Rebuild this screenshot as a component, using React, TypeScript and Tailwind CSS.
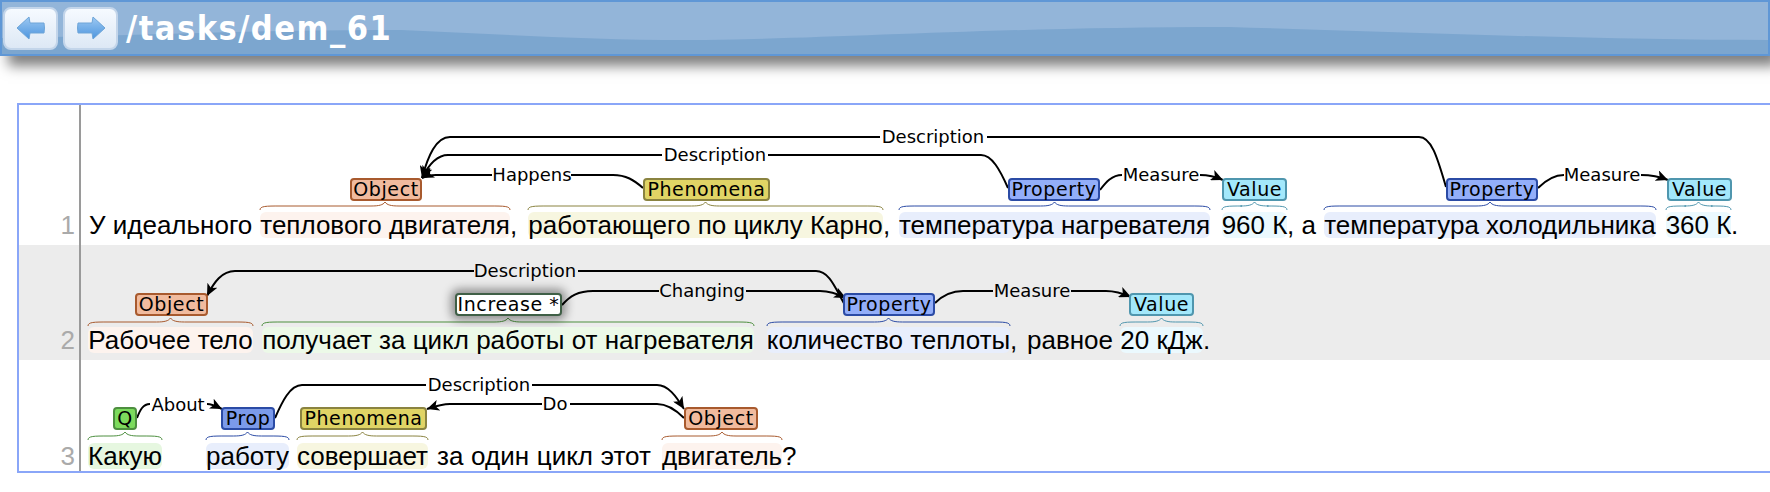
import React from 'react';

const tagBase =
  'absolute flex items-center justify-center h-[23px] box-border border-2 rounded-[4px] text-[19px] tracking-[0.6px] text-black leading-none whitespace-nowrap';
const tagFont = { object: 'bg-[#f1bb9e] border-[#a85a2e]', phenomena: 'bg-[#e0d465] border-[#8a8340]', property: 'bg-[#93aef9] border-[#2b4ba5]', value: 'bg-[#a3e8fb] border-[#4f96ae]' };

const hlObject = 'bg-[#fdf3ee]';
const hlPhen = 'bg-[#f7f6e0]';
const hlProp = 'bg-[#e8eefc]';
const hlValue = 'bg-[#ebf9fe]';
const hlGreen = 'bg-[#ecf9e8]';

const labelFont = "font-['DejaVu_Sans']";

const Hl: React.FC<{ className: string; children: React.ReactNode }> = ({ className, children }) => (
  <span className={`flex h-[26px] shrink-0 items-center justify-center rounded-md ${className}`}>{children}</span>
);

const curly = (x1: number, x2: number, y: number) => {
  const mid = (x1 + x2) / 2;
  return `M${x1} ${y + 5} C${x1} ${y + 1} ${x1 + 6} ${y + 1} ${x1 + 20} ${y + 1} L${mid - 14} ${y + 1} C${mid - 6} ${y + 1} ${mid - 2} ${y} ${mid} ${y - 3} C${mid + 2} ${y} ${mid + 6} ${y + 1} ${mid + 14} ${y + 1} L${x2 - 20} ${y + 1} C${x2 - 6} ${y + 1} ${x2} ${y + 1} ${x2} ${y + 5}`;
};

type Brace = [number, number, string];

const Arcs: React.FC<{
  box: string;
  lines: string[];
  arrows: string[];
  labels: [string, number, number][];
  braces: Brace[];
  braceY: number;
  id: string;
}> = ({ box, lines, arrows, labels, braces, braceY, id }) => (
  <svg viewBox={box} className={`absolute inset-0 h-full w-full ${labelFont}`}>
    <defs>
      <marker id={id} markerUnits="userSpaceOnUse" markerWidth="13" markerHeight="11" refX="12" refY="5.5" orient="auto">
        <path d="M0 0 L12 5.5 L0 11 L3 5.5 Z" fill="#000" />
      </marker>
    </defs>
    {braces.map(([a, b, c]) => (
      <path key={a} d={curly(a, b, braceY)} fill="none" stroke={c} strokeWidth="1" />
    ))}
    {lines.map((d) => (
      <path key={d} d={d} fill="none" stroke="#000" strokeWidth="2" />
    ))}
    {arrows.map((d) => (
      <path key={d} d={d} fill="none" stroke="#000" strokeWidth="2" markerEnd={`url(#${id})`} />
    ))}
    {labels.map(([t, x, y]) => (
      <text key={t + x} x={x} y={y} textAnchor="middle" fontSize="18" fill="#000">
        {t}
      </text>
    ))}
  </svg>
);

const NavButton: React.FC<{ flip?: boolean }> = ({ flip }) => (
  <button className="flex h-[43px] w-[55px] items-center justify-center rounded-lg border-2 border-[#c3d5ea] bg-gradient-to-b from-[#f6faff] to-[#dde8f5]">
    <svg width="30" height="26" viewBox="0 0 30 26" className={flip ? 'scale-x-[-1]' : ''}>
      <defs>
        <linearGradient id={flip ? 'ar' : 'al'} x1="0" y1="0" x2="0" y2="1">
          <stop offset="0" stopColor="#9cc8f2" />
          <stop offset="1" stopColor="#4d95de" />
        </linearGradient>
      </defs>
      <path d="M1 13 L13 2 L14 8 L28 8 Q29 13 28 18 L14 18 L13 24 Z" fill={`url(#${flip ? 'ar' : 'al'})`} stroke="#6ea5d8" strokeWidth="1" strokeLinejoin="round" />
    </svg>
  </button>
);

const Num: React.FC<{ n: number; pb: string }> = ({ n, pb }) => (
  <div className={`flex w-[62px] shrink-0 items-end justify-end border-r-2 border-[#9a9a9a] ${pb}`}>
    <span className="flex h-[26px] items-center pr-[4px] text-[26px] text-[#aaaaaa]">{n}</span>
  </div>
);

const App: React.FC = () => {
  return (
    <div className="h-[492px] w-[1770px] overflow-hidden bg-white font-['Liberation_Sans',sans-serif]">
      {/* header */}
      <header className="relative flex h-[56px] items-center gap-[5px] border-2 border-[#5f97d6] bg-[#93b5d9] pl-[1px] shadow-[8px_10px_12px_rgba(0,0,0,0.5)]">
        <svg viewBox="0 0 1770 52" preserveAspectRatio="none" className="absolute inset-0 h-full w-full">
          <path d="M0 36 C130 34 280 27 400 28 C500 32 600 39 705 38 C850 36 1000 25 1230 25 C1400 30 1600 38 1770 38 L1770 52 L0 52 Z" fill="#7ca6cf" />
        </svg>
        <div className="relative flex items-center gap-[5px]">
          <NavButton />
          <NavButton flip />
          <h1 className="ml-[3px] text-[34px] font-bold tracking-[1.5px] text-white font-['DejaVu_Sans',sans-serif] [font-stretch:condensed]">/tasks/dem_61</h1>
        </div>
      </header>

      {/* sentences */}
      <div className="ml-[17px] mt-[47px] border-y-2 border-l-2 border-[#8aa6f8] text-[26px] leading-[26px] text-black">
        {/* row 1 */}
        <div className="flex h-[140px]">
          <Num n={1} pb="pb-[7px]" />
          <div className="relative flex-1">
            <Arcs
              id="a1"
              box="81 105 1689 140"
              braceY={205}
              braces={[
                [260, 510, '#a85a2e'],
                [528, 883, '#8a8340'],
                [899, 1210, '#2b4ba5'],
                [1222, 1287, '#4f96ae'],
                [1324, 1656, '#2b4ba5'],
                [1666, 1731, '#4f96ae'],
              ]}
              lines={[
                'M987 137 L1419 137 C1432 137 1438 160 1446 187',
                'M768 155 L981 155 C992 155 1000 170 1008 188',
                'M1100 190 C1106 182 1112 175 1122 175',
                'M571 175 L613 175 C626 175 634 180 643 188',
                'M1538 188 C1544 182 1552 175 1564 175',
              ]}
              arrows={[
                'M880 137 L450 137 C436 137 428 156 422 178',
                'M662 155 L448 155 C436 155 428 166 422 178',
                'M492 175 L436 175 C430 175 426 176 422 178',
                'M1200 175 C1208 175 1214 176 1223 180',
                'M1641 175 C1650 175 1658 176 1668 180',
              ]}
              labels={[
                ['Description', 933, 143],
                ['Description', 715, 161],
                ['Happens', 532, 181],
                ['Measure', 1161, 181],
                ['Measure', 1602, 181],
              ]}
            />
            <div className={`${tagBase} ${labelFont} ${tagFont.object} left-[269px] top-[73px] w-[72px]`}>Object</div>
            <div className={`${tagBase} ${labelFont} ${tagFont.phenomena} left-[562px] top-[73px] w-[127px]`}>Phenomena</div>
            <div className={`${tagBase} ${labelFont} ${tagFont.property} left-[927px] top-[73px] w-[92px]`}>Property</div>
            <div className={`${tagBase} ${labelFont} ${tagFont.value} left-[1141px] top-[73px] w-[65px]`}>Value</div>
            <div className={`${tagBase} ${labelFont} ${tagFont.property} left-[1365px] top-[73px] w-[92px]`}>Property</div>
            <div className={`${tagBase} ${labelFont} ${tagFont.value} left-[1586px] top-[73px] w-[65px]`}>Value</div>
            <div className="absolute bottom-[7px] left-0 flex items-center whitespace-nowrap">
              <span className="ml-[8px] w-[171px]">У идеального</span>
              <Hl className={`w-[250px] ${hlObject}`}>теплового двигателя</Hl>
              <span className="w-[18px]">,</span>
              <Hl className={`w-[355px] ${hlPhen}`}>работающего по циклу Карно</Hl>
              <span className="w-[16px]">,</span>
              <Hl className={`w-[311px] ${hlProp}`}>температура нагревателя</Hl>
              <span className="w-[12px]" />
              <Hl className={`w-[65px] ${hlValue}`}>960 К</Hl>
              <span className="w-[37px]">, а</span>
              <Hl className={`w-[332px] ${hlProp}`}>температура холодильника</Hl>
              <span className="w-[10px]" />
              <Hl className={`w-[65px] ${hlValue}`}>360 К</Hl>
              <span>.</span>
            </div>
          </div>
        </div>

        {/* row 2 */}
        <div className="flex h-[115px] bg-[#ececec]">
          <Num n={2} pb="pb-[7px]" />
          <div className="relative flex-1">
            <Arcs
              id="a2"
              box="81 245 1689 115"
              braceY={321}
              braces={[
                [88, 253, '#a85a2e'],
                [262, 754, '#4d8f3f'],
                [767, 1010, '#2b4ba5'],
                [1120, 1203, '#4f96ae'],
              ]}
              lines={[
                'M578 271 L816 271 C830 271 836 290 845 305',
                'M562 305 C570 296 578 291 593 291 L659 291',
                'M935 303 C942 296 950 291 963 291 L993 291',
              ]}
              arrows={[
                'M474 271 L235 271 C222 271 214 282 207 296',
                'M746 291 L820 291 C828 291 836 293 846 298',
                'M1071 291 L1106 291 C1114 291 1122 293 1131 297',
              ]}
              labels={[
                ['Description', 525, 277],
                ['Changing', 702, 297],
                ['Measure', 1032, 297],
              ]}
            />
            <div className={`${tagBase} ${labelFont} ${tagFont.object} left-[54px] top-[48px] w-[73px]`}>Object</div>
            <div className={`${tagBase} ${labelFont} left-[374px] top-[48px] w-[107px] border-[#3f5f46] bg-white shadow-[0_0_10px_4px_rgba(0,0,0,0.4)]`}>Increase *</div>
            <div className={`${tagBase} ${labelFont} ${tagFont.property} left-[762px] top-[48px] w-[92px]`}>Property</div>
            <div className={`${tagBase} ${labelFont} ${tagFont.value} left-[1048px] top-[48px] w-[65px]`}>Value</div>
            <div className="absolute bottom-[7px] left-0 flex items-center whitespace-nowrap">
              <Hl className={`ml-[7px] w-[165px] ${hlObject}`}>Рабочее тело</Hl>
              <span className="w-[9px]" />
              <Hl className={`w-[492px] ${hlGreen}`}>получает за цикл работы от нагревателя</Hl>
              <span className="w-[13px]" />
              <Hl className={`w-[243px] ${hlProp}`}>количество теплоты</Hl>
              <span className="w-[17px]">,</span>
              <span className="w-[93px]">равное</span>
              <Hl className={`w-[83px] ${hlValue}`}>20 кДж</Hl>
              <span>.</span>
            </div>
          </div>
        </div>

        {/* row 3 */}
        <div className="flex h-[111px]">
          <Num n={3} pb="pb-[2px]" />
          <div className="relative flex-1">
            <Arcs
              id="a3"
              box="81 360 1689 111"
              braceY={435}
              braces={[
                [88, 162, '#4d8f3f'],
                [206, 289, '#2b4ba5'],
                [297, 428, '#8a8340'],
                [662, 782, '#a85a2e'],
              ]}
              lines={[
                'M137 418 C140 410 143 404 150 404',
                'M275 418 C282 402 290 385 302 385 L426 385',
                'M684 418 C676 410 668 404 657 404 L570 404',
              ]}
              arrows={[
                'M207 404 C212 404 216 406 222 409',
                'M532 385 L657 385 C668 385 676 396 684 409',
                'M542 404 L450 404 C442 404 436 406 427 409',
              ]}
              labels={[
                ['About', 178, 411],
                ['Description', 479, 391],
                ['Do', 555, 410],
              ]}
            />
            <div className={`${tagBase} ${labelFont} left-[32px] top-[47px] w-[24px] border-[#4d8f3f] bg-[#7cdb5d]`}>Q</div>
            <div className={`${tagBase} ${labelFont} left-[140px] top-[47px] w-[54px] border-[#2b4ba5] bg-[#7b9aea]`}>Prop</div>
            <div className={`${tagBase} ${labelFont} ${tagFont.phenomena} left-[219px] top-[47px] w-[127px]`}>Phenomena</div>
            <div className={`${tagBase} ${labelFont} ${tagFont.object} left-[603px] top-[47px] w-[74px]`}>Object</div>
            <div className="absolute bottom-[2px] left-0 flex items-center whitespace-nowrap">
              <Hl className="ml-[7px] w-[74px] bg-[#e6f7e0]">Какую</Hl>
              <span className="w-[44px]" />
              <Hl className={`w-[83px] ${hlProp}`}>работу</Hl>
              <span className="w-[8px]" />
              <Hl className={`w-[131px] ${hlPhen}`}>совершает</Hl>
              <span className="w-[234px] pl-[9px] [word-spacing:0.5px]">за один цикл этот</span>
              <Hl className={`w-[120px] ${hlObject}`}>двигатель</Hl>
              <span>?</span>
            </div>
          </div>
        </div>
      </div>
    </div>
  );
};

export default App;
